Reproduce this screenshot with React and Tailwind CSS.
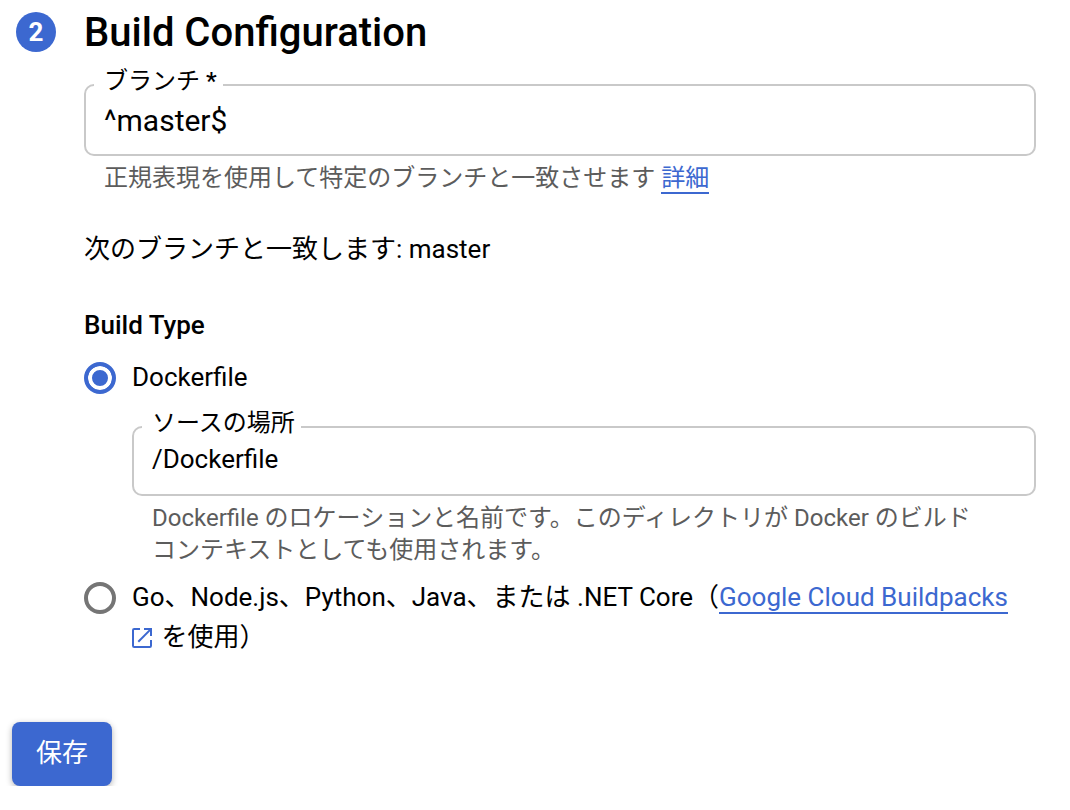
import React from 'react';

const OpenInNewIcon = () => (
  <svg className="inline-block w-5 h-5 mr-[3px] align-[-2px]" viewBox="0 0 20 20" fill="none" stroke="currentColor" strokeWidth="2" aria-hidden="true">
    <path d="M8 1H2.2Q1 1 1 2.2V17.8Q1 19 2.2 19H17.8Q19 19 19 17.8V12" />
    <path d="M12 1H19V8" />
    <path d="M18.6 1.4L6.3 13.7" />
  </svg>
);

const Radio = ({ id, defaultChecked }) => (
  <input
    type="radio"
    name="buildType"
    id={id}
    defaultChecked={defaultChecked}
    className="appearance-none shrink-0 w-8 h-8 mt-[5px] rounded-full border-4 border-[#757575] bg-white checked:border-[#3c68d0] checked:bg-[#3c68d0] checked:inset-ring-4 checked:inset-ring-white"
  />
);

// Outlined text field, the label sits in a notch of the border
const OutlinedField = ({ id, label, required, value, inputClass, children }) => (
  <div>
    <fieldset className="min-w-0 px-2 border-2 border-[#c9c9c9] rounded-[10px]">
      <legend className="pl-[10px] pr-[6px] pb-2 text-2xl leading-6">
        <label htmlFor={id}>{label}{required && <span className="font-medium"> *</span>}</label>
      </legend>
      <input id={id} type="text" defaultValue={value} className={`block w-full px-[10px] bg-transparent outline-none ${inputClass}`} />
    </fieldset>
    <p className="mt-[6px] pl-5 pr-12 text-2xl leading-8 text-[#5c5c5c]">{children}</p>
  </div>
);

const App = () => {
  return (
    <form
      lang="ja"
      className="bg-white text-black text-[26px] leading-10 font-['Roboto','Noto_Sans_CJK_JP',sans-serif]"
      onSubmit={(e) => e.preventDefault()}
    >
      <section className="flex gap-7 pl-4 pr-[34px]">
        <div className="shrink-0 w-10 h-10 mt-3 flex items-center justify-center rounded-full bg-[#3c68d0] text-white font-bold">
          2
        </div>

        <div className="flex-1 min-w-0">
          <h2 className="pt-[9px] mb-3 text-[40px] leading-12 font-medium">Build Configuration</h2>

          <OutlinedField id="branch" label="ブランチ" required value="^master$" inputClass="h-[38px] mb-[15px] text-3xl">
            正規表現を使用して特定のブランチと一致させます{' '}
            <a href="#regex" className="text-[#3c68d0] border-b-2 border-[#3c68d0]">詳細</a>
          </OutlinedField>

          <p className="mt-[35px]">次のブランチと一致します: master</p>

          <h3 id="build-type" className="mt-9 font-medium">Build Type</h3>

          <div role="radiogroup" aria-labelledby="build-type" className="mt-3">
            <div className="flex gap-4">
              <Radio id="type-dockerfile" defaultChecked />
              <label htmlFor="type-dockerfile">Dockerfile</label>
            </div>

            <div className="mt-[14px] pl-12">
              <OutlinedField id="source" label="ソースの場所" value="/Dockerfile" inputClass="h-8 mb-[19px]">
                Dockerfile のロケーションと名前です。このディレクトリが Docker のビルドコンテキストとしても使用されます。
              </OutlinedField>
            </div>

            <div className="flex gap-4 mt-[11px]">
              <Radio id="type-buildpacks" />
              <label htmlFor="type-buildpacks">
                Go、Node.js、Python、Java、または .NET Core（
                <a href="#buildpacks" className="text-[#3c68d0]">
                  <span className="border-b-2 border-[#3c68d0]">Google Cloud Buildpacks</span>{' '}
                  <OpenInNewIcon />
                </a>{' '}
                を使用）
              </label>
            </div>
          </div>
        </div>
      </section>

      <div className="mt-[57px] px-3 pt-2 overflow-hidden">
        <button type="submit" className="block h-16 px-6 pb-[2px] rounded-lg bg-[#3c68d0] text-white shadow-[0_2px_6px_rgba(0,0,0,0.3)]">
          保存
        </button>
      </div>
    </form>
  );
};

export default App;
